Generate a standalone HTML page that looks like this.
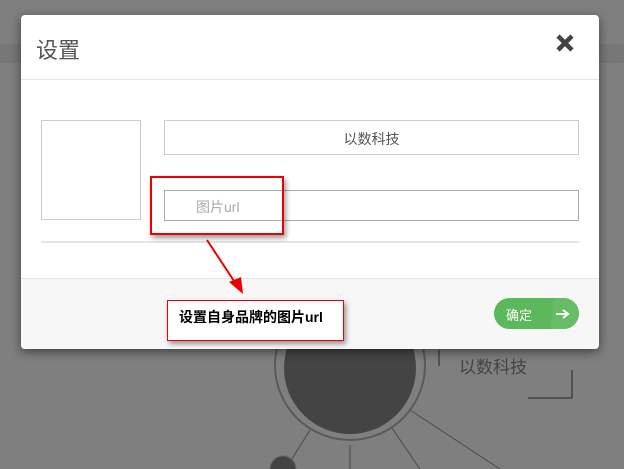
<!DOCTYPE html>
<html><head><meta charset="utf-8"><style>
body{margin:0;width:624px;height:469px;overflow:hidden;background:#7f7f7f;position:relative;font-family:"Liberation Sans","Noto Sans CJK SC",sans-serif}
.a{position:absolute}
</style></head><body>
<div class="a" style="left:0;top:44px;width:624px;height:19px;background:#777"></div>
<svg class="a" style="left:0;top:0" width="624" height="469">
<g stroke="#4a4a4a" stroke-width="1" fill="none">
<line x1="310" y1="430" x2="290" y2="462"/>
<line x1="350" y1="445" x2="350" y2="469"/>
<line x1="392" y1="428" x2="420" y2="469"/>
<line x1="410" y1="410" x2="500" y2="469"/>
</g>
<circle cx="350" cy="365" r="75" fill="none" stroke="#5a5a5a" stroke-width="2"/>
<circle cx="350" cy="368" r="66" fill="#444"/>
<circle cx="283" cy="469" r="13" fill="#444" stroke="#666"/>
<path d="M439 350 V366 M572 370 V398 H528" stroke="#444" fill="none" stroke-width="1.5"/>
<text x="459" y="373" font-size="17" fill="#444" font-family="Liberation Sans,Noto Sans CJK SC,sans-serif">以数科技</text>
</svg>
<div class="a" style="left:21px;top:15px;width:578px;height:334px;background:#fff;border-radius:4px;box-shadow:0 3px 10px rgba(0,0,0,.5);overflow:hidden">
<div class="a" style="left:15px;top:18px;font-size:22px;color:#555">设置</div>
<svg class="a" style="left:535px;top:19px" width="18" height="18"><path d="M2 2L16 16M16 2L2 16" stroke="#444" stroke-width="4.5"/></svg>
<div class="a" style="left:0;top:64px;width:578px;height:1px;background:#e5e5e5"></div>
<div class="a" style="left:20px;top:105px;width:98px;height:98px;border:1px solid #ccc"></div>
<div class="a" style="left:143px;top:105px;width:413px;height:33px;border:1px solid #ccc;text-align:center;line-height:36px;font-size:14px;color:#555">以数科技</div>
<div class="a" style="left:143px;top:175px;width:413px;height:29px;border:1px solid #aaa;line-height:32px;font-size:14px;color:#aaa;text-indent:31px">图片url</div>
<div class="a" style="left:20px;top:226px;width:538px;height:2px;background:#e5e5e5"></div>
<div class="a" style="left:0;top:263px;width:578px;height:71px;background:#f7f7f7;border-top:1px solid #e5e5e5"></div>
<div class="a" style="left:473px;top:283px;width:85px;height:31px;border-radius:16px;background:#5cb85c;overflow:hidden">
<div class="a" style="left:58px;top:0;width:40px;height:31px;background:#66bd66;transform:skewX(-8deg)"></div>
<div class="a" style="left:12px;top:7px;font-size:13px;color:#fff">确定</div>
<svg class="a" style="left:62px;top:11px" width="14" height="10"><path d="M0 5H11M7 1L12 5L7 9" stroke="#fff" stroke-width="2" fill="none"/></svg>
</div>
</div>
<div class="a" style="left:150px;top:176px;width:130px;height:55px;border:2px solid #e00;box-shadow:2px 3px 5px rgba(0,0,0,.4)"></div>
<svg class="a" style="left:0;top:0" width="624" height="469"><line x1="207" y1="240" x2="236" y2="284" stroke="#e00" stroke-width="2"/><polygon points="229,282 243,294 241,277" fill="#e00"/></svg>
<div class="a" style="left:167px;top:300px;width:177px;height:41px;border:1px solid #e00;background:#fff;box-shadow:2px 3px 5px rgba(0,0,0,.4);font-size:14px;font-weight:bold;color:#000;padding:6px 0 0 11px;box-sizing:border-box">设置自身品牌的图片url</div>
</body></html>
